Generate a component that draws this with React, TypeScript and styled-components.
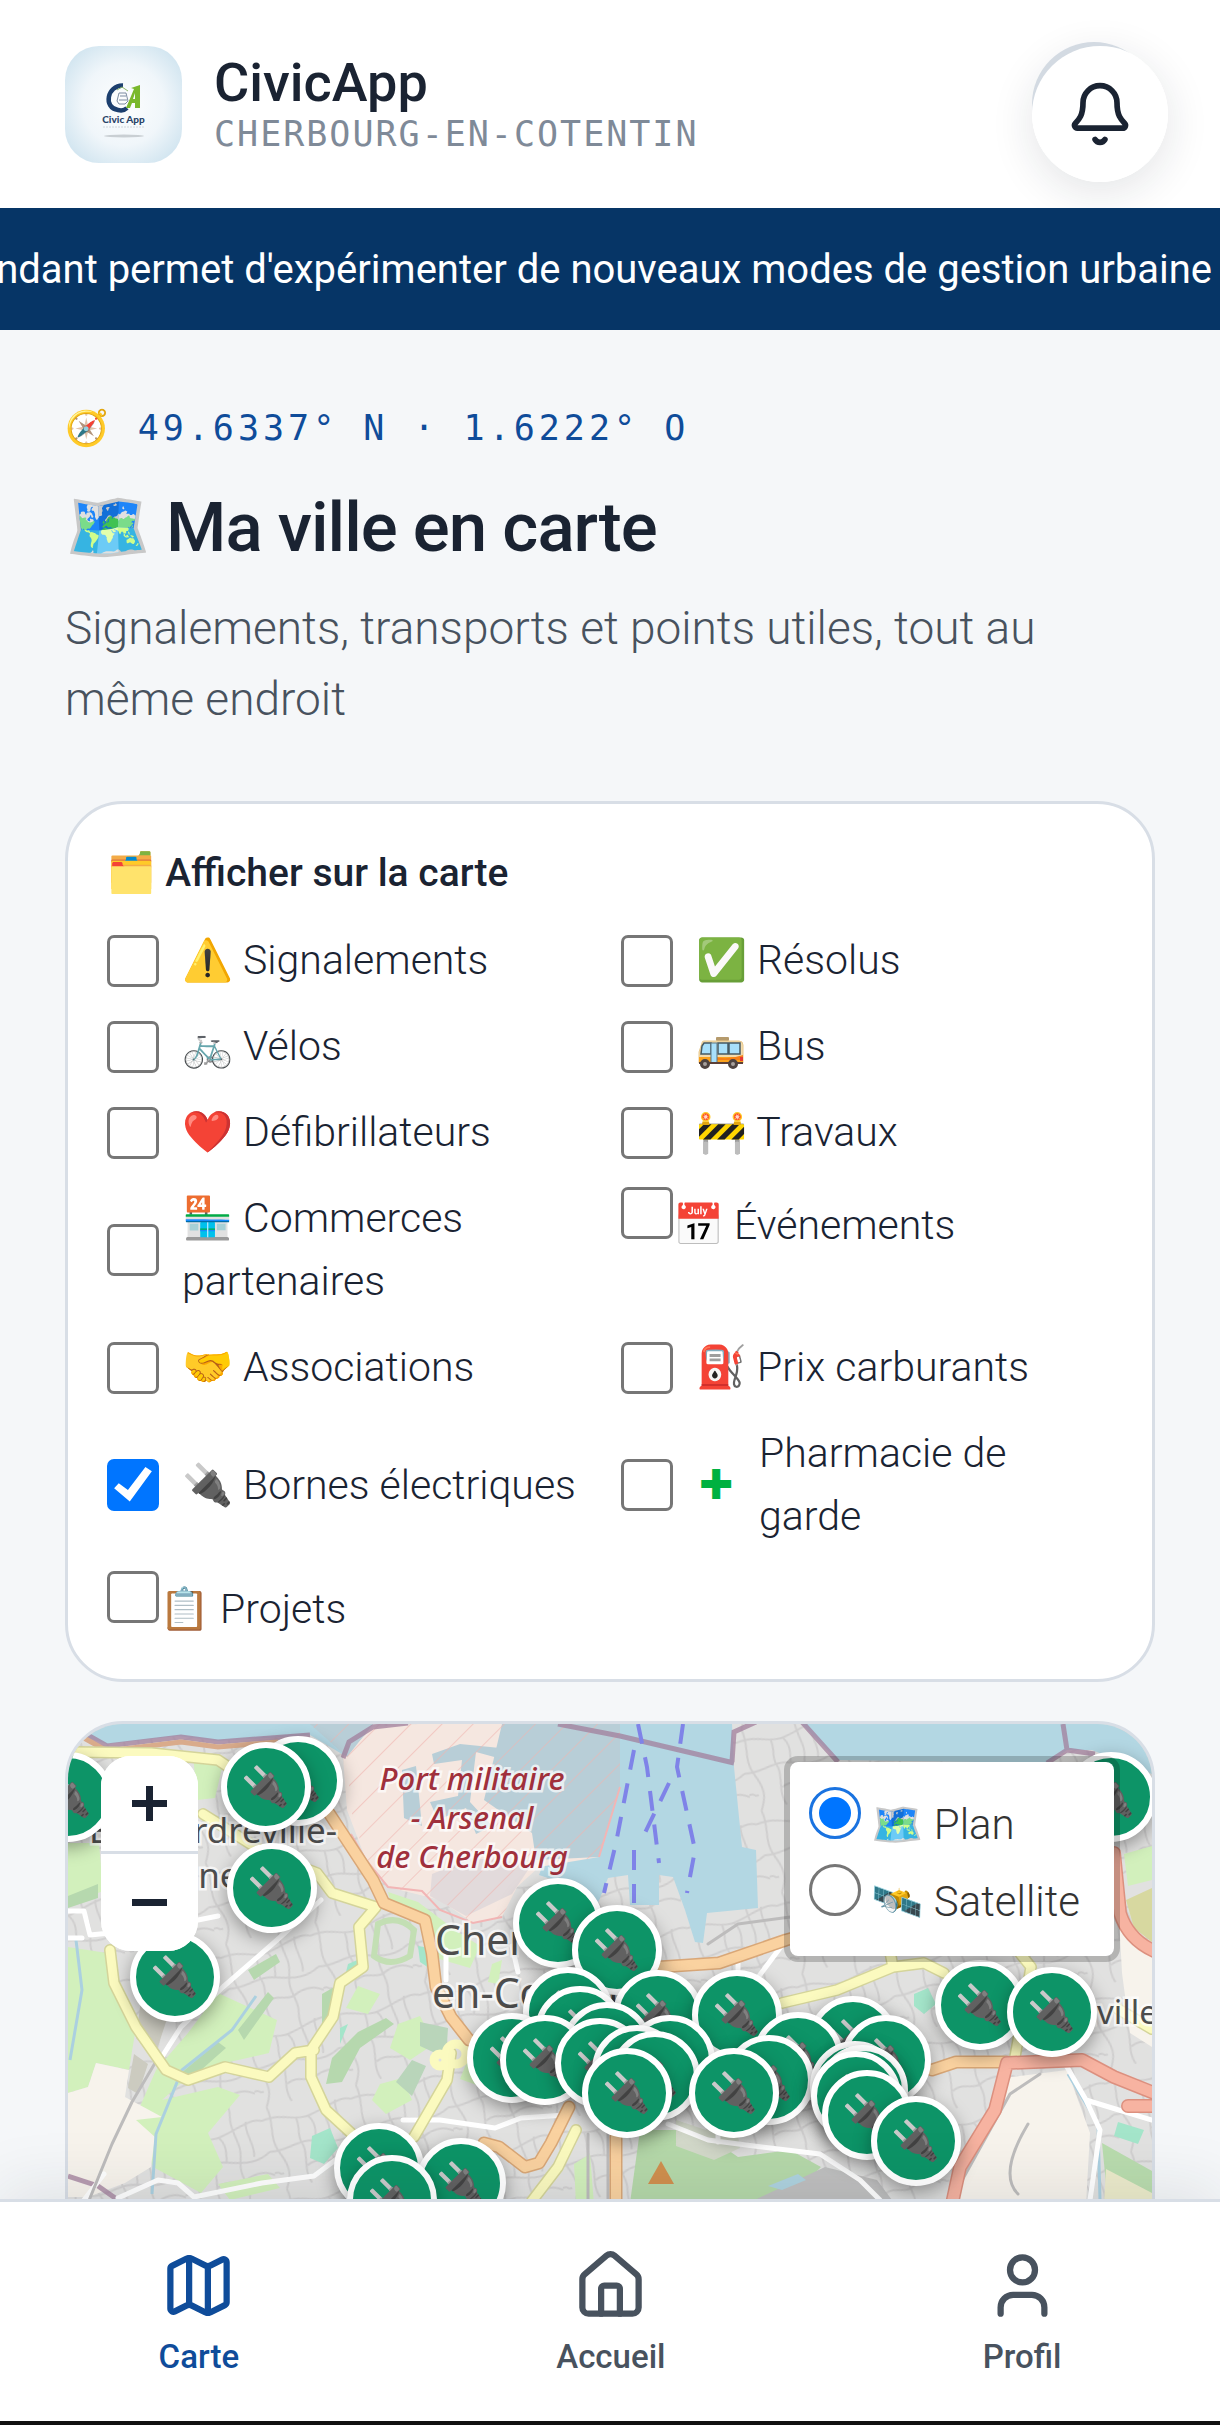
import { useState } from "react";
import styled, { createGlobalStyle } from "styled-components";
import { Bell, House, Map as MapIcon, User } from "lucide-react";

const layers = [
  { id: "signalements", icon: "⚠️", label: "Signalements" },
  { id: "resolus", icon: "✅", label: "Résolus" },
  { id: "velos", icon: "🚲", label: "Vélos" },
  { id: "bus", icon: <BusIcon />, label: "Bus" },
  { id: "defibrillateurs", icon: "❤️", label: "Défibrillateurs" },
  { id: "travaux", icon: "🚧", label: "Travaux" },
  { id: "commerces", icon: "🏪", label: "Commerces partenaires" },
  { id: "evenements", icon: "📅", label: "Événements", tight: true },
  { id: "associations", icon: "🤝", label: "Associations" },
  { id: "carburants", icon: "⛽", label: "Prix carburants" },
  { id: "bornes", icon: "🔌", label: "Bornes électriques" },
  { id: "pharmacie", icon: "✚", label: "Pharmacie de garde", cross: true },
  { id: "projets", icon: "📋", label: "Projets", tight: true },
];

// charging stations, sorted from north to south so the lower ones overlap
const stations = [
  [230, 57],
  [198, 63],
  [0, 73],
  [1043, 73],
  [204, 164],
  [490, 199],
  [549, 226],
  [107, 253],
  [912, 281],
  [500, 288],
  [984, 288],
  [590, 291],
  [669, 291],
  [512, 307],
  [785, 317],
  [539, 323],
  [730, 333],
  [444, 334],
  [477, 336],
  [602, 336],
  [818, 336],
  [532, 339],
  [569, 346],
  [587, 352],
  [701, 356],
  [787, 362],
  [795, 366],
  [559, 369],
  [666, 369],
  [788, 372],
  [799, 391],
  [848, 417],
  [311, 444],
  [393, 459],
  [324, 476],
];

export default function App() {
  const [active, setActive] = useState<string[]>(["bornes"]);
  const [base, setBase] = useState("plan");

  const toggleLayer = (id: string) => {
    setActive(
      active.includes(id) ? active.filter((a) => a !== id) : [...active, id]
    );
  };

  return (
    <Shell>
      <GlobalStyle />
      <Header>
        <Logo />
        <Brand>
          <BrandName>CivicApp</BrandName>
          <BrandCity>CHERBOURG-EN-COTENTIN</BrandCity>
        </Brand>
        <BellButton type="button" aria-label="Notifications">
          <Bell size={68} />
        </BellButton>
      </Header>
      <Ticker>
        <span>
          ndant permet d'expérimenter de nouveaux modes de gestion urbaine
        </span>
      </Ticker>
      <Main>
        <Coords>🧭 49.6337° N · 1.6222° O</Coords>
        <Title>🗺️ Ma ville en carte</Title>
        <Intro>
          Signalements, transports et points utiles, tout au même endroit
        </Intro>
        <Card>
          <CardTitle>🗂️ Afficher sur la carte</CardTitle>
          <LayerGrid>
            {layers.map((layer) => (
              <LayerLabel key={layer.id} $tight={layer.tight}>
                <Checkbox
                  type="checkbox"
                  checked={active.includes(layer.id)}
                  onChange={() => toggleLayer(layer.id)}
                />
                {layer.cross ? (
                  <CrossText>
                    <Cross>{layer.icon}</Cross>
                    <span>{layer.label}</span>
                  </CrossText>
                ) : (
                  <span>
                    {layer.icon} {layer.label}
                  </span>
                )}
              </LayerLabel>
            ))}
          </LayerGrid>
        </Card>
        <MapCard>
          <MapTiles />
          {stations.map(([x, y]) => (
            <Marker key={`${x}-${y}`} style={{ left: x, top: y }}>
              🔌
            </Marker>
          ))}
          <ZoomControl>
            <ZoomButton type="button" aria-label="Zoom avant">
              <svg width="35" height="35" viewBox="0 0 35 35">
                <path d="M0 17.5h35M17.5 0v35" />
              </svg>
            </ZoomButton>
            <ZoomButton type="button" aria-label="Zoom arrière">
              <svg width="35" height="35" viewBox="0 0 35 35">
                <path d="M0 17.5h35" />
              </svg>
            </ZoomButton>
          </ZoomControl>
          <BaseControl>
            <BaseLabel>
              <Radio
                type="radio"
                name="base"
                checked={base === "plan"}
                onChange={() => setBase("plan")}
              />
              <span>🗺️ Plan</span>
            </BaseLabel>
            <BaseLabel>
              <Radio
                type="radio"
                name="base"
                checked={base === "satellite"}
                onChange={() => setBase("satellite")}
              />
              <span>🛰️ Satellite</span>
            </BaseLabel>
          </BaseControl>
        </MapCard>
      </Main>
      <Nav>
        <NavLink href="#carte" $active>
          <MapIcon size={75} />
          Carte
        </NavLink>
        <NavLink href="#accueil">
          <House size={75} />
          Accueil
        </NavLink>
        <NavLink href="#profil">
          <User size={75} />
          Profil
        </NavLink>
      </Nav>
    </Shell>
  );
}

function Logo() {
  return (
    <LogoBox viewBox="0 0 117 117" role="img" aria-label="Civic App">
      <defs>
        <radialGradient id="logoBg" cx="50%" cy="50%" r="70%">
          <stop offset="0" stopColor="#fdfefe" />
          <stop offset="0.5" stopColor="#f0f6fa" />
          <stop offset="1" stopColor="#c5deec" />
        </radialGradient>
      </defs>
      <rect width="117" height="117" fill="url(#logoBg)" />
      <path
        d="M58 39.5C42 39 38 62 53 64C57 65 60 64 62 62"
        fill="none"
        stroke="#1c3f6e"
        strokeWidth="4.5"
      />
      <path
        d="M54 47h7l2 8-3 3h-6l-2-3zM55 50h6M54 54h8"
        fill="none"
        stroke="#7b8ba0"
      />
      <path d="M52 44l5-3 6 4" fill="none" stroke="#8fb86a" />
      <path
        d="M61 62l8-19-3-1 9-3v23h-5v-5h-3l-2 5zM68 53h2v-6z"
        fill="#7ab82c"
        fillRule="evenodd"
      />
      <text
        x="58.5"
        y="77"
        textAnchor="middle"
        fontFamily="Lato, sans-serif"
        fontSize="10"
        fontWeight="900"
        fill="#2a4468"
      >
        Civic App
      </text>
      <path d="M38 81h42" stroke="#cfd6dc" strokeDasharray="2 1" />
      <ellipse cx="59" cy="90" rx="20" ry="1.5" fill="#c9cfd3" />
    </LogoBox>
  );
}

function BusIcon() {
  return (
    <BusSvg viewBox="0 0 51 32" aria-hidden="true">
      <rect x="20" y="0" width="13" height="4" rx="1" fill="#b59a6c" />
      <path
        d="M8 4h35q4 0 4 4v18H3V15L6 6q0-2 2-2z"
        fill="#f3dcae"
        stroke="#e8c88c"
      />
      <path d="M3 20h44v6H3z" fill="#fba21c" />
      <path d="M16 19q14 5 31-1v5H16z" fill="#f57f17" />
      <path
        d="M8 6h7v11H5l1-8zM22 6h10v11H22zM33 6h11v11H33z"
        fill="#a8e0fb"
        stroke="#455a64"
        strokeWidth="1.5"
      />
      <rect x="15" y="6" width="6" height="20" fill="#a8e0fb" stroke="#5d7783" />
      <path d="M3 26h44" stroke="#5d4037" strokeWidth="2" />
      <rect x="44" y="20" width="3" height="4" fill="#e53935" />
      <g fill="#a7a09c" stroke="#4e4340" strokeWidth="3">
        <circle cx="9" cy="27" r="3.5" />
        <circle cx="37" cy="27" r="3.5" />
      </g>
    </BusSvg>
  );
}

function MapTiles() {
  return (
    <Tiles viewBox="0 0 1084 480" preserveAspectRatio="xMinYMin slice">
      <defs>
        <pattern
          id="streets"
          width="92"
          height="84"
          patternUnits="userSpaceOnUse"
          patternTransform="rotate(-14)"
        >
          <path
            d="M0 12C20 8 30 20 46 18S80 6 92 12M0 44c18 4 30-6 48 0s30 8 44 0M8 0c4 20-6 30 2 48s4 26-2 36M34 18c2 12-4 16 0 26s-6 26 0 40M62 0c-4 18 6 28 0 45s4 26 0 39M34 66c12-6 20 4 28 0s20-6 30 2M0 66c6-2 4 4 9 2M46 18c6 8 4 16 2 26M76 9c-4 12 4 24 0 36"
            fill="none"
            stroke="#d0cfcf"
            strokeWidth="2"
          />
        </pattern>
        <pattern
          id="hatch"
          width="22"
          height="22"
          patternUnits="userSpaceOnUse"
          patternTransform="rotate(45)"
        >
          <path d="M0 0v22" stroke="#efb5b0" strokeWidth="2" />
        </pattern>
      </defs>
      <rect width="1084" height="480" fill="#e1e1e0" />
      <rect width="1084" height="480" fill="url(#streets)" />

      {/* parks and fields */}
      <g fill="#d2f0bc">
        <path d="M0 119h31l4 48-35 14zM0 223l39 6 29 74-7 43-33-7-8 24-20 6z" />
        <path d="M150 269l59 27-8 33-44 10-37 14-26 23 56-13 22 8-32 38 15 34-22 26-48-26-19-47 22-50 32-37z" />
        <path d="M320 168l30 10 40 30 22 14-10 22-34-10-8-32-36-18z" />
        <path d="M330 300l22-8 14 28-24 16-20-12zM290 262l22 8-12 20-22-6z" />
        <path d="M125 30l30 10-8 34-18 2zM1056 130l28-8v34l-24 6z" />
        <path d="M150 460l50-10 12 14-50 12zM400 335l24 8-10 20-22-8z" />
        <path d="M312 360l22-6 10 22-26 14-14-14zM506 440l16-10 4 50h-18zM424 240l10-4-4 24-10-2z" />
      </g>
      <path
        d="M310 200q20-10 36 6l-4 26q-20 12-36 0z"
        fill="none"
        stroke="#c3dfb4"
        strokeWidth="6"
      />
      <path
        d="M352 298l28 6-2 30-26-12zM344 336l14 6-14 30-16-14z"
        fill="#b9d5ba"
      />
      <path
        d="M258 360l6-26 26-26 28-14 8 6-34 24-18 34zM170 306l30-38 6 6-30 42zM112 350l38-32 8 6-34 30zM180 246l28-16 4 8-26 18zM0 172l30-12v14L0 184zM254 270l14-8-2 24-12 16z"
        fill="#b6d8ae"
      />
      <path
        d="M572 406l59 0 39 27 52-7 31 17-12 12-59 24H562z"
        fill="#b5d8a9"
      />
      <path d="M608 396l30 10 30-6 4 24-26 12-38-14z" fill="#d3d9ca" />
      <path d="M678 480l79-37 52 13 18 24z" fill="#bfbfbf" />
      <path d="M700 462l30-12 8 6-24 10z" fill="#aed3df" />
      <g fill="#a4e5ca">
        <path d="M1050 398l26 8-6 14-24-8zM244 412l18-8 8 20-14 16-14-6zM846 270l14-6 8 16-12 10-10-8zM350 222l12 2 2 22-12-8zM280 240l14-6-4 10-12 4zM272 304l8-4-8 20z" />
      </g>
      <g fill="#f7f3ec">
        <path d="M0 369l20-6 8-24 33 7-4 27 37 20-26 3 19 17-4 30-26 16-37 14H0z" />
        <path d="M892 443l51-90 56-7 23 63-4 71H884zM1050 176l34 57v90l-22-14-8-60z" />
      </g>
      <path d="M1058 176l26-12v54l-18-14z" fill="#d7d8a0" />
      <path d="M1034 419l50 28v33h-44z" fill="#b9dcae" />
      <path d="M1038 445l46 24v11h-48z" fill="#ecebcb" />
      <path d="M74 268l26 24-14 42-18-20zM66 330l14 10-10 30-10-6z" fill="#cccbc0" />

      {/* sea and harbour */}
      <g fill="#b3d7e3">
        <path d="M0 0h305l-26 33-37-22-92 6-40-5-71 8-39-12z" />
        <path d="M530 0h134l2 43 8 80 14 3 2 58-51 5-4 30-8-1-10-32-12-33-14-2v30h-29l-2-30-20 3-10 25-29-18-30-10z" />
        <path d="M734 0h350v50l-60-24-25 0-20 13-210-3z" />
      </g>
      <path
        d="M305 3l45-3h202l0 63-21 70-60 10-22 20-15 30-29 6-33-23-52-13-22-27-19-50-4-53z"
        fill="#f5e7e0"
      />
      <path
        d="M434 0h118v63l-21 70-63 3-4-27-48-33z"
        fill="#b8ced7"
      />
      <path
        d="M364 30l28-10 40 4-2 10-22-6-6 50 22 24-16 8-10-26-28 12-8-18 28-6 4-36-28 4zM334 46l14-4 6 60-18-8z"
        fill="#b8ced7"
      />
      <path d="M364 150l40-16 60 6-20 30-46 22-36-20z" fill="#e2dadb" />
      <path d="M242 0h63l-26 33z" fill="#b8ced7" />
      <path
        d="M242 0l37 33 4 53 15 50 22 27 52 13 33 23 29-6 15-30 22-20 60-10 21-70V0z"
        fill="url(#hatch)"
        opacity="0.6"
      />
      <path
        d="M283 110l15 26 22 27 34 4 18 19 33 13 29-6M531 133l21-70"
        fill="none"
        stroke="#f2b5b5"
        strokeWidth="2"
      />
      <g fill="none" stroke="#a17f9c" strokeWidth="5" opacity="0.75">
        <path d="M16 9l23 13 74-9 37 5 92-7M275 34l6-16 24-15 35-4M490 0l62 12 114 27M664 38l2-30 22-10M734-2l36 40M995 0l4 26 28 4M979 39l20-13M0 452l30 10 20 14" />
      </g>
      <path
        d="M16 14l23 13 74-9 37 5 60-5"
        fill="none"
        stroke="#d9ab8b"
        strokeWidth="5"
      />
      <g
        fill="none"
        stroke="#7f83e8"
        strokeWidth="4"
        strokeDasharray="20 14"
      >
        <path d="M570 0l9 43 12 96M615 0l-6 43 18 83-8 43M566 26l-18 93-12 50M566 126v53M601 59l-26 54" />
      </g>

      {/* streams */}
      <path
        d="M8 216l6 50-12 70M84 470l4-60 26-64 50-40 24-34M1000 350l30 50 2 76"
        fill="none"
        stroke="#abd0e0"
        strokeWidth="3"
      />

      {/* roads */}
      <g fill="none" strokeLinejoin="round" strokeLinecap="round">
        <g stroke="#ffffff" strokeWidth="5">
          <path d="M16 476l20-26M50 474l40-18 20 3 16 14 68-14 52-7 40-30M90 339l23-36 42-40 54-47 44-40M335 396h37l55 8 26-10 44-3M0 187l16 0 6 24 20-2M150 192l-40 8-36 8M0 214h14" />
          <path d="M600 400l40 16 46 6 66 8 40 26 20 20M999 343l19 33 66 20M1018 376l14 30-10 70M650 396v22M718 216l-30 40M670 236v20M378 226v30M444 222l6 26" />
        </g>
        <g stroke="#bdbcbc" strokeWidth="3">
          <path d="M22 474l22-54 20-42 26-44M892 460l50-90 30-20M960 400q-30 50-10 70M540 400v80M520 410v70M640 220l30-20 60-8" />
        </g>
        <g stroke="#d4d49a" strokeWidth="12">
          <path d="M5 28l78 1 67 7 30 20M135 90l62 39 52 20 15 20 44 14-17 20 4 40-23 16-7 34-22 33v27l15 33 25 23M246 326l-19 3-26 24-44-10-37 13-22-10-30-43-22-44-4-33M383 329l-4 27-33 57M508 406l-18 37-26 34M714 279l55-13 56-23 31-4 20 10M825 243l-4-20M947 223l16 20-16 90M1050 285l34 20" />
        </g>
        <g stroke="#fbfabf" strokeWidth="9">
          <path d="M5 28l78 1 67 7 30 20M135 90l62 39 52 20 15 20 44 14-17 20 4 40-23 16-7 34-22 33v27l15 33 25 23M246 326l-19 3-26 24-44-10-37 13-22-10-30-43-22-44-4-33M383 329l-4 27-33 57M508 406l-18 37-26 34M714 279l55-13 56-23 31-4 20 10M825 243l-4-20M947 223l16 20-16 90M1050 285l34 20" />
          <circle cx="372" cy="336" r="6" />
          <circle cx="388" cy="330" r="10" />
        </g>
        <g stroke="#d9a777" strokeWidth="13">
          <path d="M261 89l44 67 11 23 41 17 7 33 4 34 15 30 18 23M501 383l-18 36-12 20-14 4-26-20-15-4M548 413v70M591 243l60-4 67-23 50-14M864 346l24-8h51" />
        </g>
        <g stroke="#fad2a0" strokeWidth="10">
          <path d="M261 89l44 67 11 23 41 17 7 33 4 34 15 30 18 23M501 383l-18 36-12 20-14 4-26-20-15-4M548 413v70M591 243l60-4 67-23 50-14M864 346l24-8h51" />
        </g>
        <g stroke="#dc907f" strokeWidth="14">
          <path d="M884 480l8-37 35-57 12-47 75-3 32 17 40 16M1046 129l6 60q8 26 34 38M1060 382h26" />
        </g>
        <g stroke="#f7b3a1" strokeWidth="11">
          <path d="M884 480l8-37 35-57 12-47 75-3 32 17 40 16M1046 129l6 60q8 26 34 38M1060 382h26" />
        </g>
      </g>
      <path d="M593 437l13 23h-26z" fill="#d08f4e" />

      <PlaceName x="21" y="119" fontSize="35">
        Équeurdreville-
      </PlaceName>
      <PlaceName x="54" y="164" fontSize="35">
        Hainneville
      </PlaceName>
      <PlaceName x="367" y="231" fontSize="41">
        Cherbourg-
      </PlaceName>
      <PlaceName x="364" y="284" fontSize="41">
        en-Cotentin
      </PlaceName>
      <PlaceName x="932" y="300" fontSize="33">
        Tourlaville
      </PlaceName>
      <Harbour textAnchor="middle" fontSize="31">
        <tspan x="404" y="66">
          Port militaire
        </tspan>
        <tspan x="404" y="105">
          - Arsenal
        </tspan>
        <tspan x="404" y="144">
          de Cherbourg
        </tspan>
      </Harbour>
    </Tiles>
  );
}

const GlobalStyle = createGlobalStyle`
  * {
    box-sizing: border-box;
  }
  body {
    margin: 0;
    background: #f5f7f9;
    color: #1a2332;
    font-family: Roboto, "Noto Color Emoji", sans-serif;
    font-weight: 300;
  }
`;

const Shell = styled.div`
  height: 100vh;
  display: flex;
  flex-direction: column;
  overflow: hidden;
`;

const Header = styled.header`
  display: flex;
  align-items: flex-start;
  flex: none;
  padding: 46px 52px 26px 65px;
  background: #fff;
`;

const LogoBox = styled.svg`
  width: 117px;
  height: 117px;
  flex: none;
  border-radius: 34px;
`;

const BusSvg = styled.svg`
  width: 51px;
  height: 32px;
  vertical-align: -9px;
`;

const Brand = styled.div`
  flex: 1;
  padding: 7px 0 0 32px;
`;

const BrandName = styled.div`
  font-size: 54px;
  font-weight: 500;
  line-height: 60px;
`;

const BrandCity = styled.div`
  font-family: "DejaVu Sans Mono", monospace;
  font-size: 35px;
  font-weight: 400;
  line-height: 42px;
  letter-spacing: 2px;
  color: #7f8a98;
`;

const BellButton = styled.button`
  position: relative;
  display: grid;
  place-items: center;
  width: 136px;
  height: 136px;
  padding: 0;
  border: 0;
  border-radius: 50%;
  background: #fff;
  color: #1a2332;
  box-shadow: 0 10px 44px rgba(26, 35, 50, 0.12);
  isolation: isolate;
  &::before {
    content: "";
    position: absolute;
    z-index: -2;
    left: 0;
    top: -4px;
    width: 124px;
    height: 124px;
    border-radius: 50%;
    background: #d3dae2;
  }
  &::after {
    content: "";
    position: absolute;
    z-index: -1;
    inset: 0;
    border-radius: 50%;
    background: #fff;
  }
`;

const Ticker = styled.div`
  display: flex;
  justify-content: flex-end;
  flex: none;
  position: relative;
  overflow: hidden;
  padding: 38px 8px 36px;
  background: #063566;
  color: #fff;
  font-size: 40px;
  font-weight: 400;
  line-height: 48px;
  white-space: nowrap;
`;

const Main = styled.main`
  flex: 1;
  min-height: 0;
  overflow: hidden;
  padding: 70px 65px 0;
`;

const Coords = styled.p`
  margin: 0 0 30px;
  font-family: "DejaVu Sans Mono", "Noto Color Emoji", monospace;
  font-size: 35px;
  font-weight: 400;
  line-height: 56px;
  letter-spacing: 4px;
  color: #0f4c9a;
`;

const Title = styled.h1`
  margin: 0 0 24px;
  font-size: 69px;
  font-weight: 500;
  line-height: 83px;
  letter-spacing: -1px;
`;

const Intro = styled.p`
  margin: 0 0 66px;
  font-size: 46px;
  line-height: 71px;
  color: #48525e;
`;

const Card = styled.section`
  padding: 46px 39px 38px;
  border: 3px solid #d8dee6;
  border-radius: 58px;
  background: #fff;
`;

const CardTitle = styled.h2`
  margin: 0 0 33px;
  font-size: 39px;
  font-weight: 500;
  line-height: 46px;
`;

const LayerGrid = styled.div`
  display: grid;
  grid-template-columns: 1fr 1fr;
  gap: 23px 22px;
`;

const LayerLabel = styled.label<{ $tight?: boolean }>`
  display: flex;
  align-items: ${(p) => (p.$tight ? "baseline" : "center")};
  gap: ${(p) => (p.$tight ? "0" : "23px")};
  font-size: 41px;
  line-height: 63px;
`;

const Checkbox = styled.input`
  appearance: none;
  flex: none;
  width: 52px;
  height: 52px;
  margin: 0;
  border: 3px solid #767676;
  border-radius: 7px;
  background: #fff;
  &:checked {
    border-color: #0075ff;
    background: #0075ff;
  }
  &:checked::before {
    content: "";
    display: block;
    height: 100%;
    background: #fff;
    clip-path: polygon(9% 57%, 19% 46%, 39% 61%, 77% 11%, 91% 20%, 43% 86%);
  }
`;

const CrossText = styled.span`
  display: flex;
  align-items: center;
  padding-right: 40px;
`;

const Cross = styled.span`
  flex: none;
  width: 63px;
  padding-left: 3px;
  color: #00b140;
  font-family: "DejaVu Sans", sans-serif;
  font-weight: 700;
`;

const MapCard = styled.section`
  position: relative;
  height: 560px;
  margin-top: 39px;
  overflow: hidden;
  border: 3px solid #d8dee6;
  border-radius: 58px;
  background: #e1e0df;
`;

const Tiles = styled.svg`
  display: block;
  width: 100%;
  height: 480px;
`;

const PlaceName = styled.text`
  font-family: "Noto Sans", sans-serif;
  font-weight: 400;
  fill: #4d4d4d;
  stroke: rgba(255, 255, 255, 0.7);
  stroke-width: 5px;
  paint-order: stroke;
`;

const Harbour = styled(PlaceName)`
  font-style: italic;
  font-weight: 500;
  fill: #a0303c;
`;

const Marker = styled.span`
  position: absolute;
  display: grid;
  place-items: center;
  width: 90px;
  height: 90px;
  margin: -45px 0 0 -45px;
  border: 6px solid #fff;
  border-radius: 50%;
  background: #0d9467;
  box-shadow: 0 6px 18px rgba(0, 0, 0, 0.35);
  font-size: 39px;
  line-height: 1;
`;

const ZoomControl = styled.div`
  position: absolute;
  left: 33px;
  top: 32px;
  display: flex;
  flex-direction: column;
  overflow: hidden;
  border-radius: 30px;
  background: #fff;
`;

const ZoomButton = styled.button`
  display: grid;
  place-items: center;
  width: 97px;
  height: 95px;
  padding: 0;
  border: 0;
  background: #fff;
  & + & {
    height: 100px;
    border-top: 3px solid #d8dee6;
  }
  path {
    stroke: #1a2332;
    stroke-width: 7px;
  }
`;

const BaseControl = styled.div`
  position: absolute;
  right: 32px;
  top: 32px;
  padding: 24px 34px 16px 19px;
  border: 6px solid rgba(0, 0, 0, 0.2);
  border-radius: 14px;
  background: #fff;
  background-clip: padding-box;
`;

const BaseLabel = styled.label`
  display: flex;
  align-items: baseline;
  gap: 10px;
  color: #333;
  font-size: 42px;
  line-height: 77px;
`;

const Radio = styled.input`
  appearance: none;
  flex: none;
  width: 52px;
  height: 52px;
  margin: 0 0 -4px;
  padding: 7px;
  border: 3px solid #767676;
  border-radius: 50%;
  background: #fff;
  &:checked {
    border-color: #1a73e0;
  }
  &:checked::before {
    content: "";
    display: block;
    height: 100%;
    border-radius: 50%;
    background: #0075ff;
  }
`;

const Nav = styled.nav`
  position: relative;
  z-index: 1;
  display: flex;
  justify-content: space-around;
  flex: none;
  padding: 46px 0 43px;
  border-top: 3px solid #d8dee6;
  border-bottom: 4px solid #111;
  background: #fff;
  box-shadow: 0 -10px 60px rgba(26, 35, 50, 0.1);
`;

const NavLink = styled.a<{ $active?: boolean }>`
  display: flex;
  flex-direction: column;
  align-items: center;
  gap: 13px;
  color: ${(p) => (p.$active ? "#0f4c9a" : "#48525e")};
  font-size: 33px;
  font-weight: 500;
  line-height: 42px;
  text-decoration: none;
`;
